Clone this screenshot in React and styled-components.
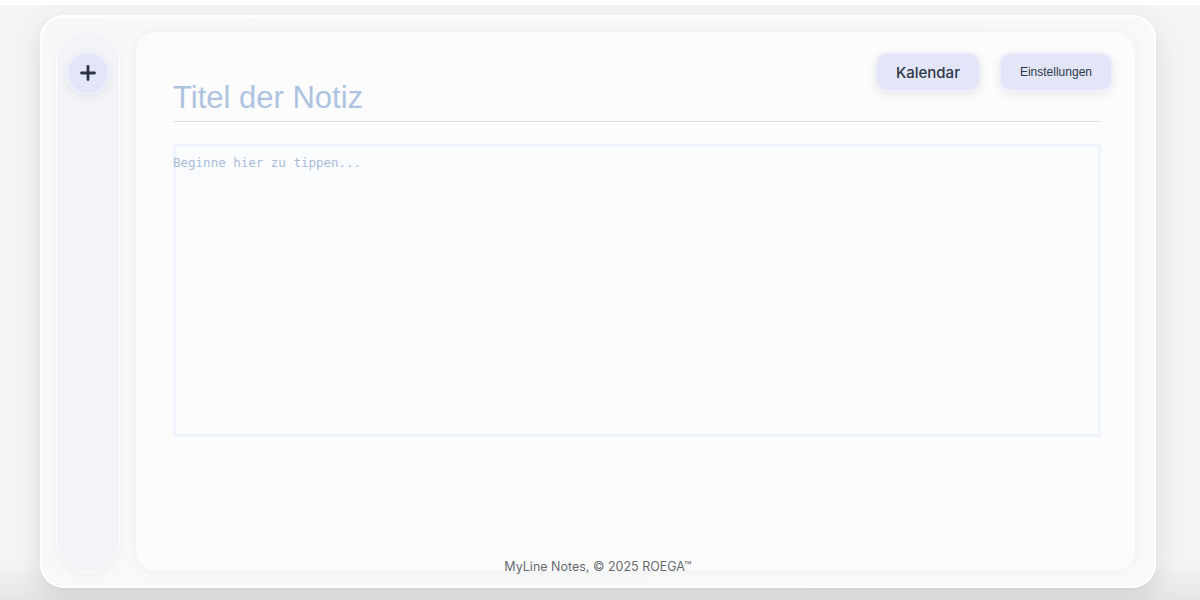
import React from "react";
import styled, { createGlobalStyle } from "styled-components";

const GlobalStyle = createGlobalStyle`
  html, body {
    margin: 0;
    padding: 0;
    background: #f3f4f6;
  }
  body {
    border-top: 5px solid #ffffff;
    font-family: Inter, "Liberation Sans", sans-serif;
  }
  * { box-sizing: border-box; }
`;

function App() {
  return (
    <>
      <GlobalStyle />
      <Page>
        <Shell>
          <Sidebar>
            <AddBtn aria-label="Neue Notiz">
              <svg width="18" height="18" viewBox="0 0 18 18">
                <path d="M9 2.5v13M2.5 9h13" stroke="#2b3545" strokeWidth="2.8" strokeLinecap="round" />
              </svg>
            </AddBtn>
          </Sidebar>
          <Editor>
            <Actions>
              <Btn big>Kalendar</Btn>
              <Btn>Einstellungen</Btn>
            </Actions>
            <TitleInput placeholder="Titel der Notiz" />
            <Body placeholder="Beginne hier zu tippen..." autoFocus />
          </Editor>
          <Footer>MyLine Notes, © 2025 ROEGA™</Footer>
        </Shell>
      </Page>
    </>
  );
}
export default App;

const Page = styled.div`
  height: 595px;
  padding: 10px 44px 0 40px;
  background: linear-gradient(180deg, #f3f4f6 0%, #f3f4f6 94%, #e4e5e6 100%);
`;

const Shell = styled.div`
  position: relative;
  width: 1116px;
  height: 573px;
  display: flex;
  gap: 16px;
  padding: 13px 19px 13px 14px;
  background: linear-gradient(135deg, #f7f8f9, #f9f9fa);
  border: 2px solid #ffffff;
  border-radius: 24px;
  box-shadow: 0 10px 28px rgba(0, 0, 0, 0.1), 0 1px 3px rgba(0, 0, 0, 0.04);
`;

const Sidebar = styled.div`
  width: 64px;
  flex-shrink: 0;
  display: flex;
  flex-direction: column;
  align-items: center;
  padding-top: 20px;
  background: #f3f4f7;
  border: 1px solid #ffffff;
  border-radius: 32px;
  box-shadow: 0 2px 8px rgba(0, 0, 0, 0.04);
`;

const AddBtn = styled.button`
  width: 44px;
  height: 44px;
  border-radius: 50%;
  display: flex;
  align-items: center;
  justify-content: center;
  padding: 0;
  background: #e2e6f8;
  border: 2px solid #eff1fb;
  box-shadow: 0 3px 8px rgba(0, 0, 0, 0.06);
  cursor: pointer;
`;

const Editor = styled.div`
  position: relative;
  flex: 1;
  margin-top: 2px;
  margin-bottom: 2px;
  display: flex;
  flex-direction: column;
  padding: 43px 34px 0 37px;
  background: #fcfcfd;
  border-radius: 20px;
  box-shadow: 0 0 12px rgba(0, 0, 0, 0.045);
`;

const Actions = styled.div`
  position: absolute;
  top: 20px;
  right: 22px;
  display: flex;
  gap: 18px;
`;

const Btn = styled.button`
  height: 40px;
  padding: 0 ${(p) => (p.big ? "19px" : "19px")};
  min-width: ${(p) => (p.big ? "100px" : "110px")};
  border-radius: 12px;
  background: #e3e6f8;
  border: 2px solid #eef0fb;
  box-shadow: 0 3px 8px rgba(0, 0, 0, 0.07);
  color: #2d3748;
  font-family: ${(p) => (p.big ? "Inter" : '"Liberation Sans"')}, sans-serif;
  font-size: ${(p) => (p.big ? "15px" : "12px")};
  font-weight: ${(p) => (p.big ? 500 : 400)};
  cursor: pointer;
`;

const TitleInput = styled.input`
  width: 100%;
  height: 47px;
  padding: 0;
  border: none;
  border-bottom: 1px solid #e0e0e0;
  background: transparent;
  outline: none;
  font-family: "Liberation Sans", Arial, sans-serif;
  font-size: 31px;
  color: #2d3748;
  &::placeholder {
    color: #adc3df;
  }
`;

const Body = styled.textarea`
  margin-top: 22px;
  width: 100%;
  height: 293px;
  resize: none;
  padding: 11px 0 0 0;
  border: none;
  outline: none;
  background: #fafbfc;
  box-shadow: inset 0 0 0 3px #f0f4fc;
  font-family: "DejaVu Sans Mono", monospace;
  font-size: 12.5px;
  color: #2d3748;
  caret-color: #2d3748;
  &::placeholder {
    color: #a9bddb;
  }
`;

const Footer = styled.div`
  position: absolute;
  left: 0;
  right: 0;
  bottom: 12px;
  text-align: center;
  font-family: Inter, sans-serif;
  font-size: 12.5px;
  color: #666a70;
`;
